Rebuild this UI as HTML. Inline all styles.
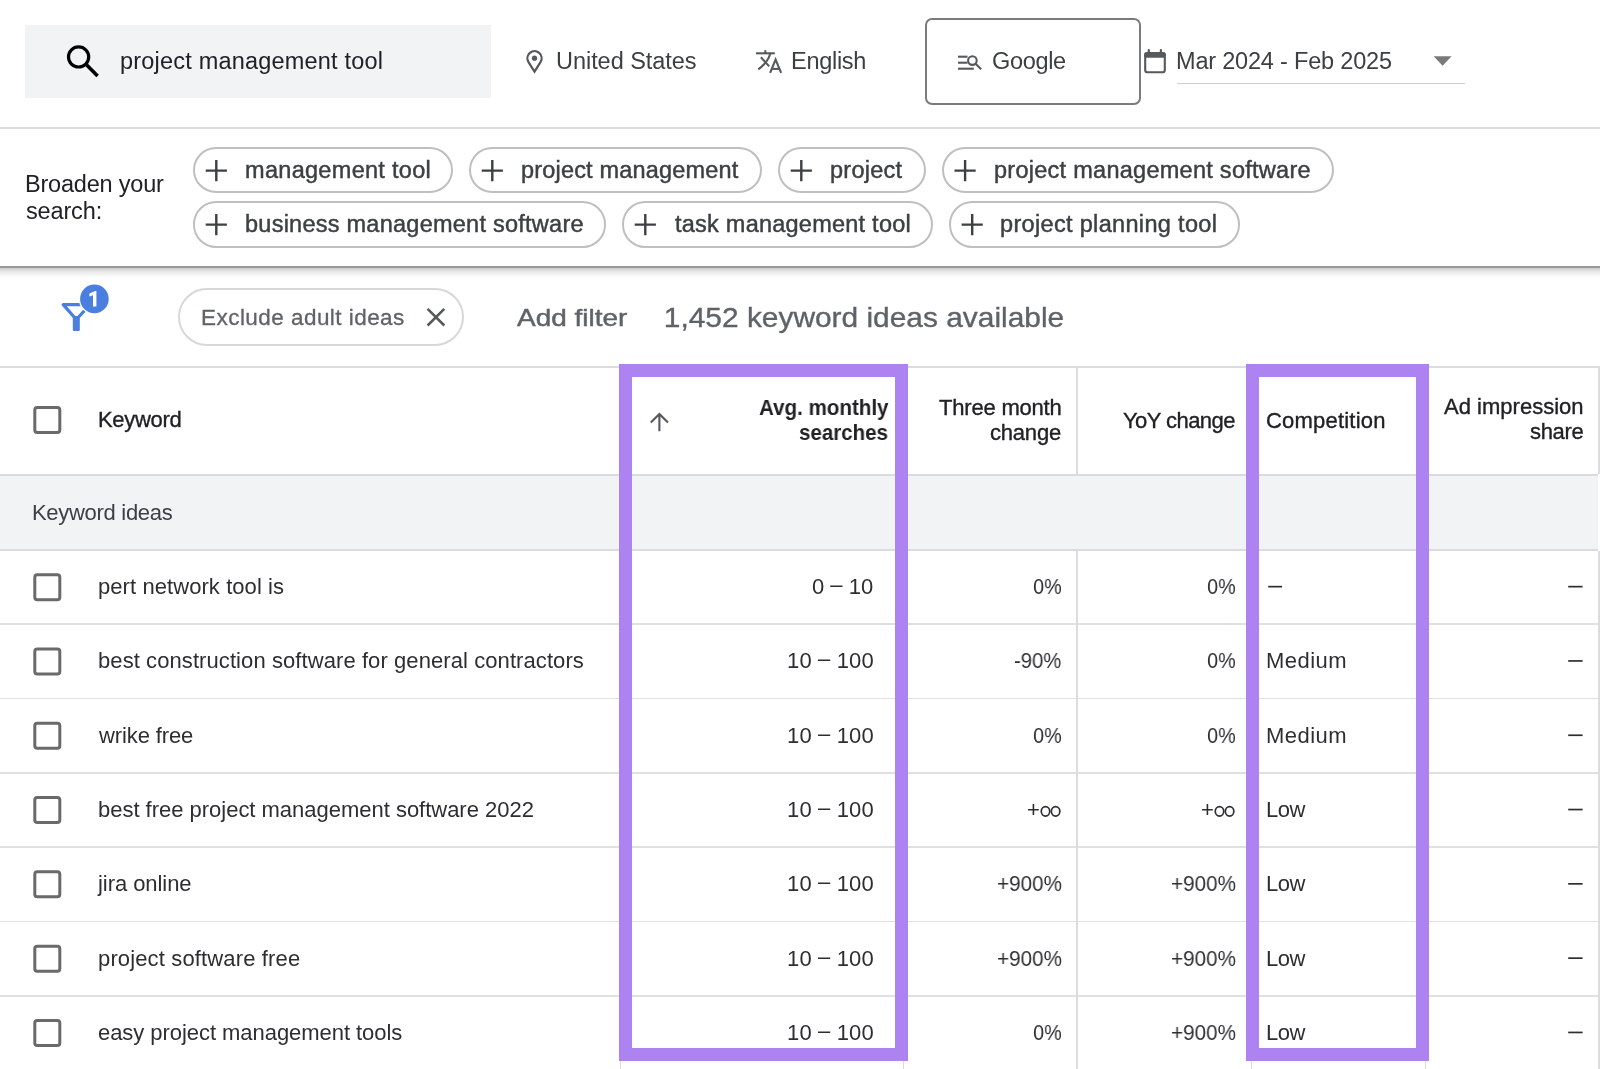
<!DOCTYPE html>
<html><head><meta charset="utf-8"><style>
html,body{margin:0;padding:0;background:#fff;}
body{width:1600px;height:1069px;position:relative;overflow:hidden;font-family:"Liberation Sans", sans-serif;}
.t{position:absolute;white-space:nowrap;font-family:"Liberation Sans", sans-serif;will-change:transform;}
.b{position:absolute;}
</style></head><body>
<div class=b style='left:25px;top:25px;width:466px;height:73px;background:#f1f3f4;'></div>
<div class=b style='left:925px;top:18px;width:216px;height:87px;box-sizing:border-box;border:2px solid #7b7b7e;border-radius:7px;'></div>
<div class=b style='left:1177px;top:82.8px;width:288px;height:1.6px;background:#cfcfcf;'></div>
<div class=b style='left:0px;top:126.6px;width:1600px;height:2px;background:#dcdcdc;'></div>
<div class=b style='left:193px;top:146.6px;width:260px;height:46.6px;box-sizing:border-box;border:2px solid #bfbfbf;border-radius:23.3px;'></div>
<div class=b style='left:469px;top:146.6px;width:292.5px;height:46.6px;box-sizing:border-box;border:2px solid #bfbfbf;border-radius:23.3px;'></div>
<div class=b style='left:778px;top:146.6px;width:148px;height:46.6px;box-sizing:border-box;border:2px solid #bfbfbf;border-radius:23.3px;'></div>
<div class=b style='left:941.8px;top:146.6px;width:391.9000000000001px;height:46.6px;box-sizing:border-box;border:2px solid #bfbfbf;border-radius:23.3px;'></div>
<div class=b style='left:193px;top:201px;width:413px;height:46.6px;box-sizing:border-box;border:2px solid #bfbfbf;border-radius:23.3px;'></div>
<div class=b style='left:622px;top:201px;width:311px;height:46.6px;box-sizing:border-box;border:2px solid #bfbfbf;border-radius:23.3px;'></div>
<div class=b style='left:948.9px;top:201px;width:290.80000000000007px;height:46.6px;box-sizing:border-box;border:2px solid #bfbfbf;border-radius:23.3px;'></div>
<div class=b style='left:0px;top:266px;width:1600px;height:2.2px;background:#979797;'></div>
<div class=b style='left:0px;top:268.2px;width:1600px;height:12px;background:linear-gradient(to bottom,rgba(0,0,0,0.20),rgba(0,0,0,0.08) 35%,rgba(0,0,0,0.02) 70%,rgba(0,0,0,0));'></div>
<div class=b style='left:177.8px;top:287.8px;width:286.6px;height:58px;box-sizing:border-box;border:2px solid #d8d8d8;border-radius:29px;'></div>
<div class=b style='left:0px;top:366px;width:1598px;height:2.2px;background:#dadce0;'></div>
<div class=b style='left:0px;top:473.5px;width:1598px;height:2.6px;background:#d9dbde;'></div>
<div class=b style='left:0px;top:476.1px;width:1598px;height:72.7px;background:#f1f3f4;'></div>
<div class=b style='left:0px;top:548.8px;width:1598px;height:2.2px;background:#dadce0;'></div>
<div class=b style='left:0px;top:623.4px;width:1598px;height:1.8px;background:#e0e0e0;'></div>
<div class=b style='left:0px;top:697.7px;width:1598px;height:1.8px;background:#e0e0e0;'></div>
<div class=b style='left:0px;top:772.0px;width:1598px;height:1.8px;background:#e0e0e0;'></div>
<div class=b style='left:0px;top:846.3px;width:1598px;height:1.8px;background:#e0e0e0;'></div>
<div class=b style='left:0px;top:920.6px;width:1598px;height:1.8px;background:#e0e0e0;'></div>
<div class=b style='left:0px;top:994.9px;width:1598px;height:1.8px;background:#e0e0e0;'></div>
<div class=b style='left:1076.2px;top:368px;width:1.8px;height:106px;background:#dadce0;'></div>
<div class=b style='left:1598px;top:366px;width:2px;height:108px;background:#dadce0;'></div>
<div class=b style='left:619.5px;top:551px;width:1.8px;height:520px;background:#dadce0;'></div>
<div class=b style='left:902.5px;top:551px;width:1.8px;height:520px;background:#dadce0;'></div>
<div class=b style='left:1076.2px;top:551px;width:1.8px;height:520px;background:#dadce0;'></div>
<div class=b style='left:1250.5px;top:551px;width:1.8px;height:520px;background:#dadce0;'></div>
<div class=b style='left:1424.5px;top:551px;width:1.8px;height:520px;background:#dadce0;'></div>
<div class=b style='left:1598px;top:551px;width:1.8px;height:520px;background:#dadce0;'></div>
<div class=b style='left:619.3px;top:364px;width:288.7px;height:696.7px;box-sizing:border-box;border:13.2px solid #ad83f2;'></div>
<div class=b style='left:1246.3px;top:364px;width:182.7px;height:696.7px;box-sizing:border-box;border:13.2px solid #ad83f2;'></div>
<svg class=b style='left:0;top:0;z-index:2' width='1600' height='1069' viewBox='0 0 1600 1069'><circle cx='78.6' cy='56.9' r='10.1' fill='none' stroke='#000' stroke-width='3.2'/><line x1='86' y1='64.3' x2='97.6' y2='75.9' stroke='#000' stroke-width='3.6'/><path d='M534.5 71.6 L528.5 62.1 A7.1 7.1 0 1 1 540.5 62.1 Z' fill='none' stroke='#56595c' stroke-width='2.2' stroke-linejoin='miter'/><circle cx='534.5' cy='58.2' r='2.6' fill='#56595c'/><g fill='none' stroke='#56595c' stroke-width='2.1'><path d='M756 53.3 H774.8'/><path d='M765.3 50.2 V53.3'/><path d='M760.9 57.3 L769.2 66.4'/><path d='M770.2 53.8 Q767.8 62.5 758.3 69.3'/><path d='M770.1 72.9 L775.6 59.6 L781.1 72.9' stroke-linejoin='miter'/><path d='M772.1 68.9 H779.3'/></g><g fill='none' stroke='#56595c' stroke-width='2.1'><path d='M958 56.7 H967.5'/><path d='M958 62.7 H967.5'/><path d='M958 68.7 H973.8'/><circle cx='972.4' cy='60.6' r='4.3'/><path d='M975.6 63.8 L981.2 69.3'/></g><rect x='1145.2' y='53' width='19.6' height='19.2' rx='2.3' fill='none' stroke='#56595c' stroke-width='2.1'/><rect x='1144.2' y='52.2' width='21.6' height='5.6' rx='2' fill='#56595c'/><path d='M1148.8 50 V53 M1160.9 50 V53' stroke='#56595c' stroke-width='2.2' stroke-linecap='round'/><polygon points='1433.6,56.2 1451.6,56.2 1442.6,65.8' fill='#7a7a7a'/><path d='M205.70000000000002 170.6 H226.9 M216.3 160.0 V181.2' stroke='#3c4043' stroke-width='2.4'/><path d='M481.7 170.6 H502.90000000000003 M492.3 160.0 V181.2' stroke='#3c4043' stroke-width='2.4'/><path d='M790.6999999999999 170.6 H811.9 M801.3 160.0 V181.2' stroke='#3c4043' stroke-width='2.4'/><path d='M954.4999999999999 170.6 H975.6999999999999 M965.0999999999999 160.0 V181.2' stroke='#3c4043' stroke-width='2.4'/><path d='M205.70000000000002 224.6 H226.9 M216.3 214.0 V235.2' stroke='#3c4043' stroke-width='2.4'/><path d='M634.6999999999999 224.6 H655.9 M645.3 214.0 V235.2' stroke='#3c4043' stroke-width='2.4'/><path d='M961.5999999999999 224.6 H982.8 M972.1999999999999 214.0 V235.2' stroke='#3c4043' stroke-width='2.4'/><path d='M63.2 304.6 L90 304.6 L76.3 319.5 Z' fill='none' stroke='#4a7fe0' stroke-width='3.2' stroke-linejoin='round'/><rect x='72.8' y='316' width='7' height='15' rx='1.2' fill='#4a7fe0'/><circle cx='94.4' cy='298.9' r='15.6' fill='#fff'/><circle cx='94.4' cy='298.9' r='14.3' fill='#4a7fe0'/><path d='M89.4 293.6 L95.2 290.9 H96.4 V306.4 H93.0 V295.3 L89.4 296.6 Z' fill='#fff'/><path d='M427.6 308.8 L444.3 325.5 M444.3 308.8 L427.6 325.5' stroke='#56595c' stroke-width='2.5'/><path d='M650.8 422.6 L659.4 414 L668 422.6 M659.4 414.2 V431.3' fill='none' stroke='#56595c' stroke-width='2.1'/><rect x='34.8' y='407.5' width='25' height='25' rx='2.5' fill='none' stroke='#6a6a6a' stroke-width='3'/><rect x='34.8' y='574.65' width='25' height='25' rx='2.5' fill='none' stroke='#6a6a6a' stroke-width='3'/><rect x='34.8' y='648.95' width='25' height='25' rx='2.5' fill='none' stroke='#6a6a6a' stroke-width='3'/><rect x='34.8' y='723.25' width='25' height='25' rx='2.5' fill='none' stroke='#6a6a6a' stroke-width='3'/><rect x='34.8' y='797.55' width='25' height='25' rx='2.5' fill='none' stroke='#6a6a6a' stroke-width='3'/><rect x='34.8' y='871.85' width='25' height='25' rx='2.5' fill='none' stroke='#6a6a6a' stroke-width='3'/><rect x='34.8' y='946.15' width='25' height='25' rx='2.5' fill='none' stroke='#6a6a6a' stroke-width='3'/><rect x='34.8' y='1020.45' width='25' height='25' rx='2.5' fill='none' stroke='#6a6a6a' stroke-width='3'/></svg>
<svg class=b style='left:0;top:0;z-index:2' width='1600' height='1069'><path d='M1268.2 586.65 H1282.1' stroke='#2d2e31' stroke-width='1.7'/><path d='M1568.2 586.65 H1582.6' stroke='#2d2e31' stroke-width='1.7'/><path d='M1568.2 660.95 H1582.6' stroke='#2d2e31' stroke-width='1.7'/><path d='M1568.2 735.25 H1582.6' stroke='#2d2e31' stroke-width='1.7'/><ellipse cx='1045.50' cy='811.35' rx='4.25' ry='4.75' fill='none' stroke='#2d2e31' stroke-width='1.7'/><ellipse cx='1055.60' cy='811.35' rx='4.25' ry='4.75' fill='none' stroke='#2d2e31' stroke-width='1.7'/><ellipse cx='1219.50' cy='811.35' rx='4.25' ry='4.75' fill='none' stroke='#2d2e31' stroke-width='1.7'/><ellipse cx='1229.60' cy='811.35' rx='4.25' ry='4.75' fill='none' stroke='#2d2e31' stroke-width='1.7'/><path d='M1568.2 809.55 H1582.6' stroke='#2d2e31' stroke-width='1.7'/><path d='M1568.2 883.85 H1582.6' stroke='#2d2e31' stroke-width='1.7'/><path d='M1568.2 958.15 H1582.6' stroke='#2d2e31' stroke-width='1.7'/><path d='M1568.2 1032.45 H1582.6' stroke='#2d2e31' stroke-width='1.7'/></svg>
<div class=t style='left:119.90px;top:50.00px;font-size:23.5px;line-height:23.5px;font-weight:400;color:#202124;letter-spacing:0.200px;'>project management tool</div>
<div class=t style='left:555.50px;top:50.40px;font-size:23.5px;line-height:23.5px;font-weight:400;color:#3c4043;letter-spacing:-0.042px;'>United States</div>
<div class=t style='left:790.70px;top:50.30px;font-size:23.5px;line-height:23.5px;font-weight:400;color:#3c4043;letter-spacing:-0.283px;'>English</div>
<div class=t style='left:992.00px;top:50.30px;font-size:23.5px;line-height:23.5px;font-weight:400;color:#3c4043;letter-spacing:-0.340px;'>Google</div>
<div class=t style='left:1176.00px;top:50.00px;font-size:23.5px;line-height:23.5px;font-weight:400;color:#3c4043;letter-spacing:-0.194px;'>Mar 2024 - Feb 2025</div>
<div class=t style='left:24.90px;top:172.90px;font-size:23.5px;line-height:23.5px;font-weight:400;color:#202124;letter-spacing:-0.195px;'>Broaden your</div>
<div class=t style='left:25.90px;top:199.75px;font-size:23.5px;line-height:23.5px;font-weight:400;color:#202124;letter-spacing:-0.150px;'>search:</div>
<div class=t style='left:245.25px;top:159.20px;font-size:23.5px;line-height:23.5px;font-weight:400;color:#3c4043;letter-spacing:0.304px;-webkit-text-stroke:0.45px #3c4043;'>management tool</div>
<div class=t style='left:521.00px;top:159.20px;font-size:23.5px;line-height:23.5px;font-weight:400;color:#3c4043;letter-spacing:0.176px;-webkit-text-stroke:0.45px #3c4043;'>project management</div>
<div class=t style='left:830.00px;top:159.20px;font-size:23.5px;line-height:23.5px;font-weight:400;color:#3c4043;letter-spacing:0.250px;-webkit-text-stroke:0.45px #3c4043;'>project</div>
<div class=t style='left:994.00px;top:159.20px;font-size:23.5px;line-height:23.5px;font-weight:400;color:#3c4043;letter-spacing:0.269px;-webkit-text-stroke:0.45px #3c4043;'>project management software</div>
<div class=t style='left:245.25px;top:213.40px;font-size:23.5px;line-height:23.5px;font-weight:400;color:#3c4043;letter-spacing:0.250px;-webkit-text-stroke:0.45px #3c4043;'>business management software</div>
<div class=t style='left:674.50px;top:213.40px;font-size:23.5px;line-height:23.5px;font-weight:400;color:#3c4043;letter-spacing:0.237px;-webkit-text-stroke:0.45px #3c4043;'>task management tool</div>
<div class=t style='left:1000.40px;top:213.40px;font-size:23.5px;line-height:23.5px;font-weight:400;color:#3c4043;letter-spacing:0.330px;-webkit-text-stroke:0.45px #3c4043;'>project planning tool</div>
<div class=t style='left:200.80px;top:307.00px;font-size:22.5px;line-height:22.5px;font-weight:400;color:#5f6368;letter-spacing:0.456px;-webkit-text-stroke:0.3px #5f6368;'>Exclude adult ideas</div>
<div class=t style='left:516.50px;top:305.60px;font-size:24.5px;line-height:24.5px;font-weight:400;color:#5f6368;letter-spacing:0.000px;-webkit-text-stroke:0.45px #5f6368;transform:scaleX(1.1418);transform-origin:0px 0;'>Add filter</div>
<div class=t style='left:664.00px;top:303.60px;font-size:27.5px;line-height:27.5px;font-weight:400;color:#5f6368;letter-spacing:0.000px;-webkit-text-stroke:0.35px #5f6368;transform:scaleX(1.0866);transform-origin:2px 0;'>1,452 keyword ideas available</div>
<div class=t style='left:98.30px;top:409.10px;font-size:22px;line-height:22px;font-weight:400;color:#202124;letter-spacing:-0.317px;-webkit-text-stroke:0.35px #202124;'>Keyword</div>
<div class=t style='left:758.50px;top:396.50px;font-size:22px;line-height:22px;font-weight:700;color:#202124;letter-spacing:0.000px;transform:scaleX(0.9343);transform-origin:1px 0;'>Avg. monthly</div>
<div class=t style='left:799.00px;top:421.50px;font-size:22px;line-height:22px;font-weight:700;color:#202124;letter-spacing:0.000px;transform:scaleX(0.9309);transform-origin:1px 0;'>searches</div>
<div class=t style='left:939.00px;top:397.00px;font-size:22px;line-height:22px;font-weight:400;color:#202124;letter-spacing:-0.200px;-webkit-text-stroke:0.35px #202124;'>Three month</div>
<div class=t style='left:990.00px;top:421.60px;font-size:22px;line-height:22px;font-weight:400;color:#202124;letter-spacing:-0.200px;-webkit-text-stroke:0.35px #202124;'>change</div>
<div class=t style='left:1123.00px;top:409.60px;font-size:22px;line-height:22px;font-weight:400;color:#202124;letter-spacing:-0.556px;-webkit-text-stroke:0.35px #202124;'>YoY change</div>
<div class=t style='left:1266.40px;top:409.80px;font-size:22px;line-height:22px;font-weight:400;color:#202124;letter-spacing:0.200px;-webkit-text-stroke:0.35px #202124;'>Competition</div>
<div class=t style='left:1443.80px;top:396.40px;font-size:22px;line-height:22px;font-weight:400;color:#202124;letter-spacing:0.017px;-webkit-text-stroke:0.35px #202124;'>Ad impression</div>
<div class=t style='left:1530.30px;top:421.30px;font-size:22px;line-height:22px;font-weight:400;color:#202124;letter-spacing:-0.325px;-webkit-text-stroke:0.35px #202124;'>share</div>
<div class=t style='left:32.00px;top:501.80px;font-size:22px;line-height:22px;font-weight:400;color:#3c4043;letter-spacing:-0.300px;'>Keyword ideas</div>
<div class=t style='left:97.50px;top:576.15px;font-size:22px;line-height:22px;font-weight:400;color:#2d2e31;letter-spacing:0.074px;'>pert network tool is</div>
<div class=t style='left:811.50px;top:576.15px;font-size:22px;line-height:22px;font-weight:400;color:#2d2e31;letter-spacing:0.000px;'>0 <span style="position:relative;top:-2px">–</span> 10</div>
<div class=t style='left:1033.00px;top:576.15px;font-size:22px;line-height:22px;font-weight:400;color:#2d2e31;letter-spacing:0.000px;transform:scaleX(0.9000);transform-origin:1px 0;'>0%</div>
<div class=t style='left:1207.00px;top:576.15px;font-size:22px;line-height:22px;font-weight:400;color:#2d2e31;letter-spacing:0.000px;transform:scaleX(0.9000);transform-origin:1px 0;'>0%</div>
<div class=t style='left:97.50px;top:650.45px;font-size:22px;line-height:22px;font-weight:400;color:#2d2e31;letter-spacing:0.082px;'>best construction software for general contractors</div>
<div class=t style='left:786.50px;top:650.45px;font-size:22px;line-height:22px;font-weight:400;color:#2d2e31;letter-spacing:0.143px;'>10 <span style="position:relative;top:-2px">–</span> 100</div>
<div class=t style='left:1014.00px;top:650.45px;font-size:22px;line-height:22px;font-weight:400;color:#2d2e31;letter-spacing:0.000px;transform:scaleX(0.9200);transform-origin:1px 0;'>-90%</div>
<div class=t style='left:1207.00px;top:650.45px;font-size:22px;line-height:22px;font-weight:400;color:#2d2e31;letter-spacing:0.000px;transform:scaleX(0.9000);transform-origin:1px 0;'>0%</div>
<div class=t style='left:1265.50px;top:650.45px;font-size:22px;line-height:22px;font-weight:400;color:#2d2e31;letter-spacing:0.480px;'>Medium</div>
<div class=t style='left:98.50px;top:724.75px;font-size:22px;line-height:22px;font-weight:400;color:#2d2e31;letter-spacing:-0.111px;'>wrike free</div>
<div class=t style='left:786.50px;top:724.75px;font-size:22px;line-height:22px;font-weight:400;color:#2d2e31;letter-spacing:0.143px;'>10 <span style="position:relative;top:-2px">–</span> 100</div>
<div class=t style='left:1033.00px;top:724.75px;font-size:22px;line-height:22px;font-weight:400;color:#2d2e31;letter-spacing:0.000px;transform:scaleX(0.9000);transform-origin:1px 0;'>0%</div>
<div class=t style='left:1207.00px;top:724.75px;font-size:22px;line-height:22px;font-weight:400;color:#2d2e31;letter-spacing:0.000px;transform:scaleX(0.9000);transform-origin:1px 0;'>0%</div>
<div class=t style='left:1265.50px;top:724.75px;font-size:22px;line-height:22px;font-weight:400;color:#2d2e31;letter-spacing:0.480px;'>Medium</div>
<div class=t style='left:97.50px;top:799.05px;font-size:22px;line-height:22px;font-weight:400;color:#2d2e31;letter-spacing:-0.017px;'>best free project management software 2022</div>
<div class=t style='left:786.50px;top:799.05px;font-size:22px;line-height:22px;font-weight:400;color:#2d2e31;letter-spacing:0.143px;'>10 <span style="position:relative;top:-2px">–</span> 100</div>
<div class=t style='left:1026.80px;top:799.05px;font-size:22px;line-height:22px;font-weight:400;color:#2d2e31;letter-spacing:0.000px;'>+</div>
<div class=t style='left:1200.80px;top:799.05px;font-size:22px;line-height:22px;font-weight:400;color:#2d2e31;letter-spacing:0.000px;'>+</div>
<div class=t style='left:1265.50px;top:799.05px;font-size:22px;line-height:22px;font-weight:400;color:#2d2e31;letter-spacing:-0.450px;'>Low</div>
<div class=t style='left:97.60px;top:873.35px;font-size:22px;line-height:22px;font-weight:400;color:#2d2e31;letter-spacing:-0.060px;'>jira online</div>
<div class=t style='left:786.50px;top:873.35px;font-size:22px;line-height:22px;font-weight:400;color:#2d2e31;letter-spacing:0.143px;'>10 <span style="position:relative;top:-2px">–</span> 100</div>
<div class=t style='left:997.00px;top:873.35px;font-size:22px;line-height:22px;font-weight:400;color:#2d2e31;letter-spacing:0.000px;transform:scaleX(0.9403);transform-origin:1px 0;'>+900%</div>
<div class=t style='left:1171.00px;top:873.35px;font-size:22px;line-height:22px;font-weight:400;color:#2d2e31;letter-spacing:0.000px;transform:scaleX(0.9403);transform-origin:1px 0;'>+900%</div>
<div class=t style='left:1265.50px;top:873.35px;font-size:22px;line-height:22px;font-weight:400;color:#2d2e31;letter-spacing:-0.450px;'>Low</div>
<div class=t style='left:97.50px;top:947.65px;font-size:22px;line-height:22px;font-weight:400;color:#2d2e31;letter-spacing:0.140px;'>project software free</div>
<div class=t style='left:786.50px;top:947.65px;font-size:22px;line-height:22px;font-weight:400;color:#2d2e31;letter-spacing:0.143px;'>10 <span style="position:relative;top:-2px">–</span> 100</div>
<div class=t style='left:997.00px;top:947.65px;font-size:22px;line-height:22px;font-weight:400;color:#2d2e31;letter-spacing:0.000px;transform:scaleX(0.9403);transform-origin:1px 0;'>+900%</div>
<div class=t style='left:1171.00px;top:947.65px;font-size:22px;line-height:22px;font-weight:400;color:#2d2e31;letter-spacing:0.000px;transform:scaleX(0.9403);transform-origin:1px 0;'>+900%</div>
<div class=t style='left:1265.50px;top:947.65px;font-size:22px;line-height:22px;font-weight:400;color:#2d2e31;letter-spacing:-0.450px;'>Low</div>
<div class=t style='left:97.50px;top:1021.95px;font-size:22px;line-height:22px;font-weight:400;color:#2d2e31;letter-spacing:-0.050px;'>easy project management tools</div>
<div class=t style='left:786.50px;top:1021.95px;font-size:22px;line-height:22px;font-weight:400;color:#2d2e31;letter-spacing:0.143px;'>10 <span style="position:relative;top:-2px">–</span> 100</div>
<div class=t style='left:1033.00px;top:1021.95px;font-size:22px;line-height:22px;font-weight:400;color:#2d2e31;letter-spacing:0.000px;transform:scaleX(0.9000);transform-origin:1px 0;'>0%</div>
<div class=t style='left:1171.00px;top:1021.95px;font-size:22px;line-height:22px;font-weight:400;color:#2d2e31;letter-spacing:0.000px;transform:scaleX(0.9403);transform-origin:1px 0;'>+900%</div>
<div class=t style='left:1265.50px;top:1021.95px;font-size:22px;line-height:22px;font-weight:400;color:#2d2e31;letter-spacing:-0.450px;'>Low</div>
</body></html>
